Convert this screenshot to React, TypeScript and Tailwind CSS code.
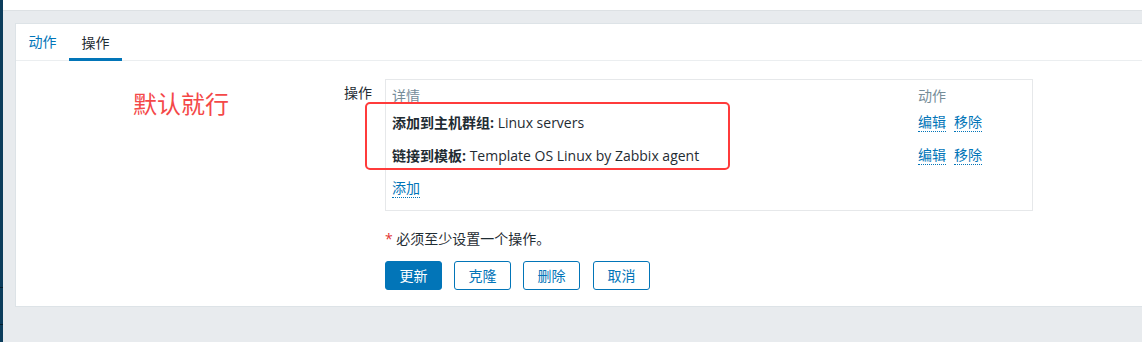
import React from "react";

const font = { fontFamily: '"Open Sans", "Noto Sans CJK SC", sans-serif' };

function Link({ children }: { children: React.ReactNode }) {
  return (
    <span className="text-[#0275b8] border-b border-dotted border-[#0275b8] leading-[18px] cursor-pointer">
      {children}
    </span>
  );
}

export default function App() {
  return (
    <div
      className="w-[1142px] h-[342px] flex overflow-hidden text-[14px] text-[#1f2c33]"
      style={font}
    >
      <div className="w-[3px] h-full bg-[#0c3d5c] flex flex-col">
        <div className="h-[287px]" />
        <div className="h-px bg-[#05202f]" />
        <div className="h-[36px]" />
        <div className="h-px bg-[#05202f]" />
      </div>
      <div className="flex-1 flex flex-col bg-[#e8ebee]">
        <div className="h-[11px] bg-white border-b border-[#dde1e4]" />
        <div className="pt-[12px] pl-[12px]">
          <div className="relative h-[284px] bg-white border border-r-0 border-[#dde3e7]">
            <div className="flex h-[37px] border-b border-[#ebeef0]">
              <div className="w-[53px] flex items-center justify-center text-[#0275b8] pb-[1px]">
                动作
              </div>
              <div className="w-[53px] flex items-center justify-center border-b-[3px] border-[#0275b8] mb-[-1px] pt-[2px]">
                操作
              </div>
            </div>
            <div className="flex pt-[18px]">
              <div className="w-[356px] text-right pt-[4px] leading-[20px]">操作</div>
              <div className="ml-[13px] flex flex-col">
                <div className="w-[648px] h-[132px] border border-[#e6e8ea] px-[6px] pt-[4px] flex flex-col">
                  <div className="h-[22px] flex items-center text-[#768d99]">
                    <div className="w-[526px]">详情</div>
                    <div>动作</div>
                  </div>
                  <div className="h-[33px] flex items-center">
                    <div className="w-[526px]">
                      <span className="font-bold">添加到主机群组:</span> Linux servers
                    </div>
                    <div className="flex gap-[8px]">
                      <Link>编辑</Link>
                      <Link>移除</Link>
                    </div>
                  </div>
                  <div className="h-[33px] flex items-center">
                    <div className="w-[526px]">
                      <span className="font-bold">链接到模板:</span> Template OS Linux by Zabbix agent
                    </div>
                    <div className="flex gap-[8px]">
                      <Link>编辑</Link>
                      <Link>移除</Link>
                    </div>
                  </div>
                  <div className="h-[33px] flex items-center">
                    <Link>添加</Link>
                  </div>
                </div>
                <div className="mt-[18px] leading-[20px]">
                  <span className="text-[#e33734]">*</span> 必须至少设置一个操作。
                </div>
                <div className="mt-[12px] flex gap-[12px]">
                  <button className="w-[57px] h-[29px] rounded-[3px] bg-[#0275b8] text-white border border-[#0275b8]">
                    更新
                  </button>
                  <button className="w-[57px] h-[29px] rounded-[3px] bg-white text-[#0275b8] border border-[#0275b8]">
                    克隆
                  </button>
                  <button className="w-[57px] h-[29px] rounded-[3px] bg-white text-[#0275b8] border border-[#0275b8]">
                    删除
                  </button>
                  <button className="ml-px w-[57px] h-[29px] rounded-[3px] bg-white text-[#0275b8] border border-[#0275b8]">
                    取消
                  </button>
                </div>
              </div>
            </div>
            <div className="absolute left-[117px] top-[68px] text-[24px] leading-[24px] text-[#f44848]">
              默认就行
            </div>
            <div className="absolute left-[349px] top-[78px] w-[365px] h-[68px] border-2 border-[#ff3b3b] rounded-[5px] pointer-events-none" />
          </div>
        </div>
      </div>
    </div>
  );
}
